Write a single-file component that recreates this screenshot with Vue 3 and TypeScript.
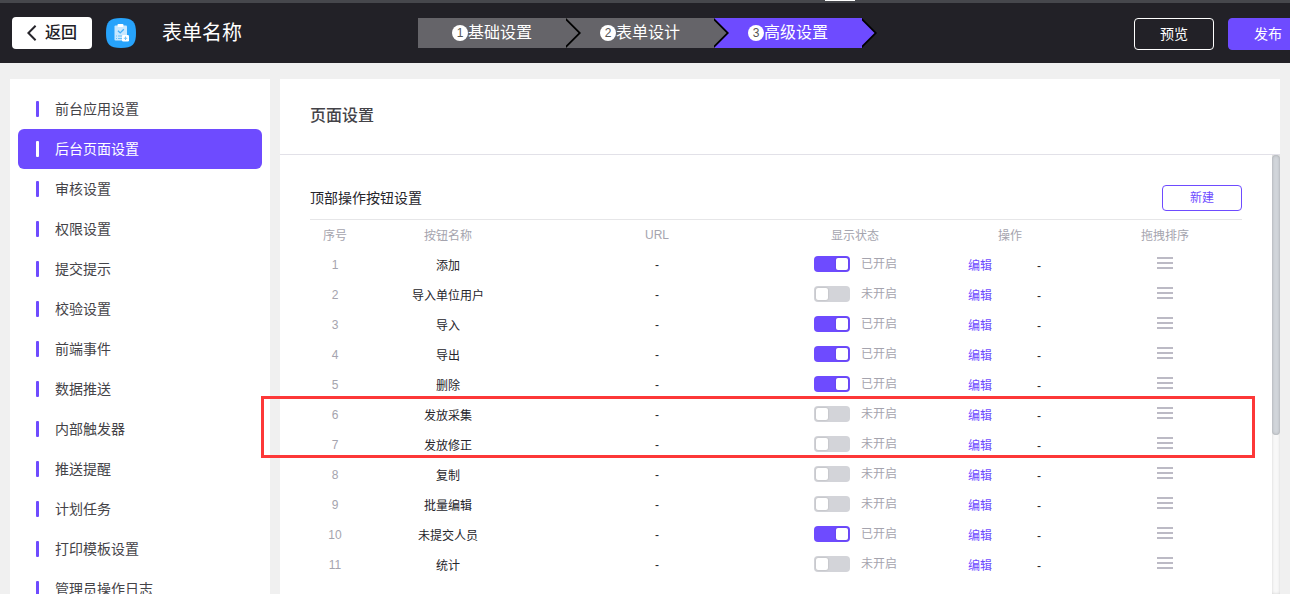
<script setup lang="ts">
interface ButtonRow {
  name: string
  enabled: boolean
}

const steps: string[] = ['基础设置', '表单设计', '高级设置']
const activeStep = 2

const menu: string[] = [
  '前台应用设置',
  '后台页面设置',
  '审核设置',
  '权限设置',
  '提交提示',
  '校验设置',
  '前端事件',
  '数据推送',
  '内部触发器',
  '推送提醒',
  '计划任务',
  '打印模板设置',
  '管理员操作日志',
]
const activeMenu = 1

const columns: string[] = ['序号', '按钮名称', 'URL', '显示状态', '操作', '拖拽排序']

const rows: ButtonRow[] = [
  { name: '添加', enabled: true },
  { name: '导入单位用户', enabled: false },
  { name: '导入', enabled: true },
  { name: '导出', enabled: true },
  { name: '删除', enabled: true },
  { name: '发放采集', enabled: false },
  { name: '发放修正', enabled: false },
  { name: '复制', enabled: false },
  { name: '批量编辑', enabled: false },
  { name: '未提交人员', enabled: true },
  { name: '统计', enabled: false },
]
</script>

<template>
  <div class="page">
    <div class="top-strip"><span class="strip-mark"></span></div>
    <header class="header">
      <button class="back">
        <svg class="chevron" width="10" height="16" viewBox="0 0 10 16">
          <path d="M8.6 .8 1.4 8l7.2 7.2" fill="none" stroke="#26252b" stroke-width="2" />
        </svg>
        <span>返回</span>
      </button>
      <svg class="app-icon" width="30" height="30" viewBox="0 0 30 30">
        <path
          d="M15 0C26.5 0 30 3.5 30 15S26.5 30 15 30 0 26.500 0 15 3.500 0 15 0Z"
          fill="#27a3fb"
        />
        <rect x="8.500" y="7.500" width="12.500" height="15" rx="1" fill="#c9e8ff" />
        <rect x="11.500" y="6" width="6" height="3" rx="1" fill="#fff" />
        <path d="m12 12.700 2.200 2.200 3.600-3.700" fill="none" stroke="#45aff8" stroke-width="1.300" />
        <path d="M10 18h1m1 0h4M10 20.500h1m1 0h4" stroke="#69c0fa" stroke-width="1" />
        <rect x="16" y="17" width="7" height="6.500" rx="1.300" fill="#fff" />
        <path d="M19.500 18.500v3.500M17.750 20.250h3.500" stroke="#74c5fb" stroke-width="1" />
      </svg>
      <h1 class="title">表单名称</h1>
      <nav class="steps">
        <div
          v-for="(step, i) in steps"
          :key="step"
          class="step"
          :class="{ active: i === activeStep }"
        >
          <span class="step-num">{{ i + 1 }}</span>
          <span>{{ step }}</span>
          <svg class="arrow" width="16" height="30" viewBox="0 0 16 30">
            <path d="M0 0 15 15 0 30Z" fill="#000" />
            <path class="arrow-fill" d="M0 2.500 12.500 15 0 27.500Z" />
          </svg>
        </div>
      </nav>
      <div class="actions">
        <button class="action">预览</button>
        <button class="action primary">发布</button>
      </div>
    </header>

    <div class="body">
      <aside class="sidebar">
        <div
          v-for="(item, i) in menu"
          :key="item"
          class="menu-item"
          :class="{ active: i === activeMenu }"
        >
          <i class="bar"></i>
          <span>{{ item }}</span>
        </div>
      </aside>

      <main class="panel">
        <div class="panel-head">页面设置</div>
        <div class="panel-body">
          <section class="content">
            <div class="section-head">
              <span>顶部操作按钮设置</span>
              <button class="create">新建</button>
            </div>
            <div class="row head">
              <span v-for="col in columns" :key="col" :class="{ latin: col === 'URL' }">{{ col }}</span>
            </div>
            <div v-for="(row, i) in rows" :key="row.name" class="row">
              <span class="index">{{ i + 1 }}</span>
              <span class="name">{{ row.name }}</span>
              <span class="dash">-</span>
              <span class="status">
                <i class="switch" :class="{ on: row.enabled }"></i>
                <em>{{ row.enabled ? '已开启' : '未开启' }}</em>
              </span>
              <span class="ops">
                <a>编辑</a>
                <b>-</b>
              </span>
              <span class="drag"><i></i><i></i><i></i></span>
            </div>
          </section>
          <div class="track"><div class="thumb"></div></div>
        </div>
      </main>
    </div>
    <div class="highlight"></div>
  </div>
</template>

<style>
body {
  overflow: hidden;
}
</style>

<style scoped>
.page {
  position: relative;
  display: flex;
  flex-direction: column;
  width: 1290px;
  height: 594px;
  overflow: hidden;
  background: #f0f0f0;
  font-family: 'Liberation Sans', 'Noto Sans CJK SC', sans-serif;
  color: #26252b;
}
button {
  box-sizing: border-box;
  padding: 0;
  border: 0;
  font-family: inherit;
}
.top-strip {
  flex: none;
  height: 3px;
  padding-left: 825px;
  background: #46474c;
}
.strip-mark {
  display: block;
  width: 30px;
  height: 1px;
  background: #fff;
}
.header {
  flex: none;
  display: flex;
  align-items: flex-start;
  height: 60px;
  padding-left: 12px;
  background: #222127;
}
.back {
  display: flex;
  flex: none;
  align-items: center;
  width: 80px;
  height: 32px;
  margin-top: 14px;
  padding-left: 15px;
  border-radius: 4px;
  background: #fff;
  color: #222127;
  font-size: 16px;
  font-weight: 500;
  line-height: 30px;
}
.back span {
  margin: -1px 0 0 8px;
}
.app-icon {
  flex: none;
  margin: 15px 0 0 14px;
}
.title {
  flex: none;
  width: 256px;
  margin: 15px 0 0 26px;
  color: #fff;
  font-size: 20px;
  font-weight: 400;
  line-height: 30px;
}
.steps {
  display: flex;
  flex: none;
  margin-top: 15px;
}
.step {
  position: relative;
  display: flex;
  align-items: center;
  justify-content: center;
  width: 148px;
  height: 30px;
  background: #656469;
  color: #fff;
  font-size: 16px;
  line-height: 28px;
}
.step.active {
  background: #6e4bff;
}
.step-num {
  width: 16px;
  height: 16px;
  border-radius: 50%;
  background: #fff;
  color: #555;
  font-size: 12px;
  line-height: 16px;
  text-align: center;
}
.arrow {
  position: absolute;
  top: 0;
  left: 100%;
  z-index: 1;
}
.arrow-fill {
  fill: #656469;
}
.active .arrow-fill {
  fill: #6e4bff;
}
.actions {
  display: flex;
  gap: 14px;
  margin: 15px 0 0 272px;
}
.action {
  flex: none;
  width: 80px;
  height: 32px;
  border: 1px solid #fff;
  border-radius: 4px;
  background: transparent;
  color: #fff;
  font-size: 14px;
  line-height: 30px;
}
.action.primary {
  border-color: #6e4bff;
  background: #6e4bff;
}
.body {
  display: flex;
  gap: 10px;
  height: 515px;
  padding: 16px 10px 0;
}
.sidebar {
  box-sizing: border-box;
  flex: none;
  width: 260px;
  height: 515px;
  padding: 10px 8px 0;
  overflow: hidden;
  background: #fff;
}
.menu-item {
  display: flex;
  align-items: center;
  height: 40px;
  padding-left: 18px;
  border-radius: 6px;
  color: #444348;
  font-size: 14px;
  line-height: 40px;
}
.bar {
  width: 3px;
  height: 16px;
  margin-right: 16px;
  border-radius: 1px;
  background: #6e4bff;
}
.menu-item.active {
  background: #6e4bff;
  color: #fff;
}
.active .bar {
  background: #fff;
}
.panel {
  display: flex;
  flex-direction: column;
  width: 1000px;
  height: 515px;
  background: #fff;
}
.panel-head {
  height: 75px;
  padding-left: 30px;
  border-bottom: 1px solid #e2e1e8;
  color: #444348;
  font-size: 16px;
  font-weight: 500;
  line-height: 73px;
}
.panel-body {
  display: flex;
  flex: 1;
  justify-content: space-between;
  padding-left: 30px;
}
.content {
  width: 932px;
}
.section-head {
  display: flex;
  align-items: flex-end;
  justify-content: space-between;
  height: 64px;
  border-bottom: 1px solid #e6e6e8;
  font-size: 14px;
  line-height: 41px;
}
.create {
  width: 80px;
  height: 26px;
  margin-bottom: 8px;
  border: 1px solid #6e4bff;
  border-radius: 4px;
  background: #fff;
  color: #6e4bff;
  font-size: 12px;
  line-height: 24px;
}
.row {
  display: grid;
  grid-template-columns: 50px 176px 242px 154px 156px 154px;
  height: 30px;
  font-size: 12px;
  line-height: 30px;
  text-align: center;
}
.head,
.index {
  color: #a5a4ae;
}
.head,
.name,
.ops {
  line-height: 32px;
}
.head .latin {
  line-height: 30px;
}
.status {
  display: flex;
  padding: 6px 0 0 36px;
  line-height: 16px;
}
.status em {
  margin-left: 11px;
  color: #a5a4ae;
  font-style: normal;
}
.switch {
  box-sizing: border-box;
  width: 36px;
  height: 16px;
  padding: 2px;
  border-radius: 4px;
  background: #d3d4d9;
}
.switch::before {
  content: '';
  display: block;
  width: 12px;
  height: 12px;
  border-radius: 2px;
  background: #fff;
  box-shadow: 0 0 2px rgba(0, 0, 0, 0.2);
}
.switch.on {
  background: #6e4bff;
}
.switch.on::before {
  margin-left: 20px;
}
.ops {
  display: flex;
  padding-left: 36px;
}
.ops a {
  width: 24px;
  color: #6e4bff;
}
.ops b {
  margin-left: 45px;
  font-weight: 400;
}
.drag {
  display: flex;
  flex-direction: column;
  align-items: center;
  gap: 3px;
  padding-top: 7px;
}
.drag i {
  width: 16px;
  height: 2px;
  background: #bcbac5;
}
.track {
  width: 8px;
  background: #f8f8f8;
  box-shadow: inset 0 0 3px rgba(0, 0, 0, 0.16);
}
.thumb {
  height: 280px;
  border-radius: 5px;
  background: #d1d5da;
  box-shadow: inset 0 0 3px rgba(0, 0, 0, 0.25);
}
/* Annotation frame lying over rows 6 and 7 */
.highlight {
  position: absolute;
  box-sizing: border-box;
  top: 396px;
  left: 261px;
  width: 994px;
  height: 62px;
  border: 3px solid #fd3838;
}
</style>
